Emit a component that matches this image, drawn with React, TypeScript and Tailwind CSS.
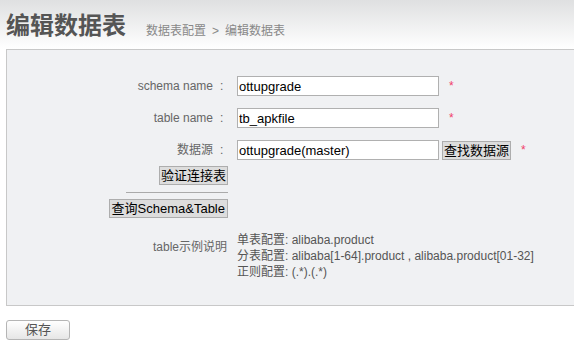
import React from "react";

const font = { fontFamily: '"Liberation Sans", Arial, "Noto Sans CJK SC", sans-serif' };

function Star() {
  return <span className="ml-[10px] text-[12px] leading-none text-[#f0406a]">*</span>;
}

function Btn({ children, className = "" }: { children: React.ReactNode; className?: string }) {
  return (
    <button
      className={
        "h-[19px] border border-[#adadad] bg-[#dddddd] px-[1px] text-[13px] leading-[17px] text-black " +
        className
      }
    >
      {children}
    </button>
  );
}

function Row({ label, children }: { label: string; children: React.ReactNode }) {
  return (
    <div className="flex items-center">
      <div className="w-[220px] text-right text-[12px] text-[#666]">
        <span>{label}</span>
        <span className="inline-block w-[14px] pl-[7px] text-left">:</span>
      </div>
      <div className="ml-[10px] flex items-center">{children}</div>
    </div>
  );
}

function Input({ value }: { value: string }) {
  return (
    <input
      readOnly
      value={value}
      className="h-[20px] w-[202px] border border-[#b0b0b0] bg-white px-[1px] text-[13px] text-black outline-none"
      style={font}
    />
  );
}

export default function App() {
  return (
    <div className="h-[342px] w-[574px] overflow-hidden bg-white" style={font}>
      <div className="flex h-[49px] items-end bg-gradient-to-b from-[#dfe0e1] to-[#ffffff] pb-[8px] pl-[6px]">
        <h1 className="text-[24px] font-bold leading-[30px] text-[#555]">编辑数据表</h1>
        <span className="mb-[1px] ml-[20px] text-[12px] text-[#888]">
          数据表配置<span className="mx-[6px]">&gt;</span>编辑数据表
        </span>
      </div>
      <div className="ml-[6px] flex h-[257px] flex-col border-y border-l border-[#c8c8c8] bg-[#f0f1f3] pt-[26px]">
        <div className="flex flex-col gap-[12px]">
          <Row label="schema name">
            <Input value="ottupgrade" />
            <Star />
          </Row>
          <Row label="table name">
            <Input value="tb_apkfile" />
            <Star />
          </Row>
          <Row label="数据源">
            <Input value="ottupgrade(master)" />
            <Btn className="ml-[3px]">查找数据源</Btn>
            <Star />
          </Row>
        </div>
        <div className="flex w-[221px] flex-col items-end">
          <Btn className="mt-[6px] h-[19px]">验证连接表</Btn>
          <div className="mt-[7px] h-px w-[102px] bg-[#aaa]" />
          <Btn className="mt-[6px] px-[2px]">查询Schema&amp;Table</Btn>
        </div>
        <div className="mt-[14px] flex items-start">
          <div className="mt-[7px] w-[220px] text-right text-[12px] leading-[16px] text-[#666]">
            table示例说明
          </div>
          <div className="ml-[10px] text-[12px] leading-[16px] text-[#555]">
            <div>单表配置: alibaba.product</div>
            <div>分表配置: alibaba[1-64].product , alibaba.product[01-32]</div>
            <div>正则配置: (.*).(.*)</div>
          </div>
        </div>
      </div>
      <div className="ml-[6px] mt-[11px]">
        <button className="h-[20px] w-[64px] rounded-[3px] border border-[#b5b5b5] bg-gradient-to-b from-white to-[#e6e6e6] text-[13px] leading-[18px] text-[#555]">
          保存
        </button>
      </div>
    </div>
  );
}
